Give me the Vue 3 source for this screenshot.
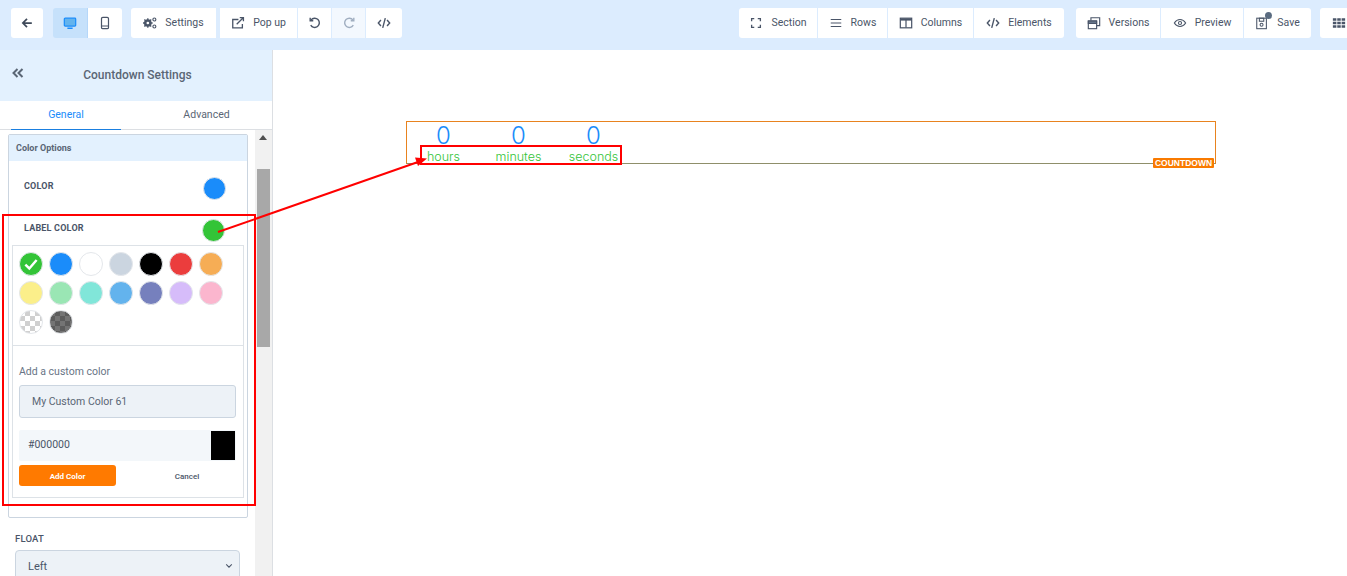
<script setup>
const leftTools = [
  { t: 'Settings', w: 85, i: 'gears' },
  { t: 'Pop up', w: 77, i: 'popup', gap: 4 },
  { w: 33, i: 'undo', gap: 1 },
  { w: 33, i: 'redo', gap: 1, dim: true },
  { w: 36, i: 'code', gap: 1 },
]
const viewTools = [
  { t: 'Section', w: 78, i: 'section' },
  { t: 'Rows', w: 69, i: 'rows', gap: 1 },
  { t: 'Columns', w: 85, i: 'cols', gap: 1 },
  { t: 'Elements', w: 90, i: 'code', gap: 1 },
]
const saveTools = [
  { t: 'Versions', w: 84, i: 'versions' },
  { t: 'Preview', w: 82, i: 'eye', gap: 1 },
  { t: 'Save', w: 67, i: 'save', gap: 1 },
]
const swatches = [
  { c: '#33c437', on: true }, { c: '#1a8cfa' }, { c: '#ffffff' }, { c: '#cbd5e0' }, { c: '#000000' }, { c: '#eb3d3d' }, { c: '#f6ad55' },
  { c: '#fbef8a' }, { c: '#9ae6b4' }, { c: '#81e6d9' }, { c: '#63b3ed' }, { c: '#7680bd' }, { c: '#d6bcfa' }, { c: '#fbb6ce' },
  { k: 'light' }, { k: 'dark' },
]
const counts = ['hours', 'minutes', 'seconds']
</script>

<template>
  <div class="page">
    <header class="topbar">
      <button class="tool back"><svg class="ic" viewBox="0 0 16 16"><path d="M13.500 8H3.500M8 3.300 3.300 8 8 12.700" fill="none" stroke="#3f4a5a" stroke-width="2"/></svg></button>
      <div class="group devices">
        <button class="tool device active"><svg class="ic" viewBox="0 0 16 16"><rect x="1.500" y="2.500" width="13" height="9" rx="1" fill="#63b3ed" stroke="#1a8cfa" stroke-width="1.400"/><path d="M5 14h6" stroke="#1a8cfa" stroke-width="1.600"/></svg></button>
        <button class="tool device m"><svg class="ic" viewBox="0 0 16 16"><rect x="4" y="1.500" width="8" height="13" rx="1.500" fill="none" stroke="#4a5568" stroke-width="1.400"/><path d="M4 11.500h8" stroke="#4a5568" stroke-width="1.200"/></svg></button>
      </div>

      <div class="group tools-left">
        <button v-for="b in leftTools" :key="b.i" class="tool" :class="{ dim: b.dim }" :style="{ width: b.w + 'px', marginLeft: (b.gap || 0) + 'px' }">
          <svg class="ic" viewBox="0 0 16 16">
            <g v-if="b.i === 'gears'">
              <circle cx="5.500" cy="8" r="3.200" fill="none" stroke="#4a5568" stroke-width="2.400"/>
              <path d="M5.500 2.500v11M0 8h11M1.600 4.100l7.800 7.800M9.400 4.100l-7.800 7.800" stroke="#4a5568" stroke-width="1.500"/>
              <circle cx="5.500" cy="8" r="1.500" fill="#fff"/>
              <circle cx="13" cy="4" r="1.700" fill="none" stroke="#4a5568" stroke-width="1.300"/>
              <circle cx="13" cy="12" r="1.700" fill="none" stroke="#4a5568" stroke-width="1.300"/>
            </g>
            <g v-else-if="b.i === 'popup'" fill="none" stroke="#4a5568" stroke-width="1.500"><path d="M13 9v4.500H2V4h6.500"/><path d="M6.500 9.500 14 2M10 1.800h4.200V6"/></g>
            <g v-else-if="b.i === 'undo'" fill="none" stroke="#4a5568" stroke-width="1.600"><path d="M3.500 4.500a5.300 5.300 0 1 1-.4 6"/><path d="M2.500 2v3.500H6"/></g>
            <g v-else-if="b.i === 'redo'" fill="none" stroke="#a0aec0" stroke-width="1.600"><path d="M12.500 4.500a5.300 5.300 0 1 0 .4 6"/><path d="M13.500 2v3.500H10"/></g>
            <g v-else fill="none" stroke="#4a5568" stroke-width="1.600"><path d="M4.500 4.500 1.500 8l3 3.500M11.500 4.500l3 3.500-3 3.500M9.500 2.500l-3 11"/></g>
          </svg>
          <span v-if="b.t" class="tool-label">{{ b.t }}</span>
        </button>
      </div>

      <div class="group tools-view">
        <button v-for="b in viewTools" :key="b.i" class="tool" :style="{ width: b.w + 'px', marginLeft: (b.gap || 0) + 'px' }">
          <svg class="ic" viewBox="0 0 16 16">
            <path v-if="b.i === 'section'" d="M3 6V3h3M10 3h3v3M13 10v3h-3M6 13H3v-3" fill="none" stroke="#4a5568" stroke-width="1.500"/>
            <path v-else-if="b.i === 'rows'" d="M2 4h12M2 8h12M2 12h12" stroke="#4a5568" stroke-width="1.400"/>
            <g v-else-if="b.i === 'cols'" fill="none" stroke="#4a5568"><rect x="1.500" y="2.500" width="13" height="11" stroke-width="1.400"/><path d="M1.500 4h13" stroke-width="2.500"/><path d="M8 4v9" stroke-width="1.400"/></g>
            <path v-else d="M4.500 4.500 1.500 8l3 3.500M11.500 4.500l3 3.500-3 3.500M9.500 2.500l-3 11" fill="none" stroke="#4a5568" stroke-width="1.600"/>
          </svg>
          <span class="tool-label">{{ b.t }}</span>
        </button>
      </div>

      <div class="group tools-save">
        <button v-for="b in saveTools" :key="b.i" class="tool" :style="{ width: b.w + 'px', marginLeft: (b.gap || 0) + 'px' }">
          <span class="ic-wrap">
            <svg class="ic" viewBox="0 0 16 16">
              <g v-if="b.i === 'versions'" fill="none" stroke="#4a5568" stroke-width="1.300"><rect x="1.500" y="5.500" width="9.500" height="9" fill="#fff"/><path d="M1.500 6h9.500v2.500h-9.500z" fill="#718096"/><path d="M4.500 5V2H14.500V11h-3.500"/></g>
              <g v-else-if="b.i === 'eye'" fill="none" stroke="#4a5568" stroke-width="1.200"><path d="M1.500 8C3.500 5 5.700 4 8 4s4.500 1 6.500 4c-2 3-4.200 4-6.500 4S3.500 11 1.500 8z"/><circle cx="8" cy="8" r="1.800"/></g>
              <g v-else fill="none" stroke="#4a5568" stroke-width="1.200"><rect x="2" y="2.500" width="11" height="12"/><rect x="5" y="2.500" width="5" height="3.500"/><circle cx="7.500" cy="10" r="1.700"/></g>
            </svg>
            <span v-if="b.i === 'save'" class="dot"></span>
          </span>
          <span class="tool-label">{{ b.t }}</span>
        </button>
      </div>

      <button class="tool grid-btn"><svg class="ic" viewBox="0 0 16 16" fill="#4a5568"><path d="M1 2.500h4v3H1zM6 2.500h4v3H6zM11 2.500h4v3h-4zM1 6.500h4v3H1zM6 6.500h4v3H6zM11 6.500h4v3h-4zM1 10.500h4v3H1zM6 10.500h4v3H6zM11 10.500h4v3h-4z"/></svg></button>
    </header>

    <div class="body">
      <aside class="side">
        <div class="side-head">
          <svg class="collapse" viewBox="0 0 12 10"><path d="M5.500 1 1.500 5l4 4M10.500 1l-4 4 4 4" fill="none" stroke="#5a6675" stroke-width="2"/></svg>
          <span>Countdown Settings</span>
        </div>
        <div class="tabs">
          <div class="tab on">General</div>
          <div class="tab">Advanced</div>
        </div>
        <div class="side-main">
          <div class="scroll-area">
            <section class="card">
              <div class="card-head">Color Options</div>
              <div class="opt-row first"><span>COLOR</span><i class="pick blue"></i></div>
              <div class="opt-row second"><span>LABEL COLOR</span><i class="pick green"></i></div>
              <div class="picker">
                <div class="swatches">
                  <span v-for="(s, n) in swatches" :key="n" class="sw" :class="[s.k, { white: s.c === '#ffffff' }]" :style="s.c ? { background: s.c } : null">
                    <svg v-if="s.on" viewBox="0 0 16 16"><path d="M3 8.500 6.500 12 13 4.500" fill="none" stroke="#fff" stroke-width="2.200"/></svg>
                  </span>
                </div>
                <div class="custom">
                  <div class="custom-title">Add a custom color</div>
                  <div class="name-input">My Custom Color 61</div>
                  <div class="hex-row"><span>#000000</span><i class="hex-box"></i></div>
                  <div class="actions">
                    <button class="add">Add Color</button>
                    <button class="cancel">Cancel</button>
                  </div>
                </div>
              </div>
            </section>
            <div class="float-label">FLOAT</div>
            <div class="select">
              <span>Left</span>
              <svg viewBox="0 0 10 6"><path d="M1.500 1 5 4.500 8.500 1" fill="none" stroke="#4a5568" stroke-width="1.300"/></svg>
            </div>
          </div>
          <div class="scrollbar">
            <svg class="up" viewBox="0 0 8 5"><path d="M4 0 8 5H0z" fill="#505050"/></svg>
            <div class="thumb"></div>
          </div>
        </div>
      </aside>

      <main class="canvas">
        <div class="countdown">
          <div v-for="c in counts" :key="c" class="unit">
            <div class="num">0</div>
            <div class="lbl">{{ c }}</div>
          </div>
          <span class="tag">COUNTDOWN</span>
        </div>
      </main>
    </div>

    <svg class="notes" width="1347" height="576" viewBox="0 0 1347 576">
      <g fill="none" stroke="#f00" stroke-width="2">
        <rect x="3" y="215" width="252" height="290"/>
        <rect x="421" y="146" width="200" height="18"/>
        <path d="M218 232 418 162"/>
      </g>
      <path d="M427 158.500 415 157.500 418 166z" fill="#f00"/>
    </svg>
  </div>
</template>

<style>
html, body { margin: 0; overflow: hidden; background: #fff; }
</style>

<style scoped>
.page { position: relative; width: 1347px; height: 576px; overflow: hidden; font-family: Roboto, "Liberation Sans", sans-serif; color: #4a5568; }
button { font-family: inherit; border: 0; padding: 0; }

.topbar { display: flex; align-items: flex-start; height: 50px; box-sizing: border-box; padding: 8px 0 0 11px; background: #dcecfe; white-space: nowrap; }
.group { display: flex; flex: none; }
.tool { flex: none; display: flex; align-items: center; justify-content: center; gap: 8px; height: 30px; background: #fff; color: #4a5568; font-size: 10.5px; }
.tool-label { line-height: 1; }
.ic { width: 14px; height: 14px; flex: none; display: block; }
.ic-wrap { position: relative; display: block; }
.dot { position: absolute; top: -4px; right: -3px; width: 7px; height: 7px; border-radius: 50%; background: #5a6b80; }
.back { width: 32px; border-radius: 3px; }
.devices { margin-left: 10px; border-radius: 3px; overflow: hidden; }
.device { width: 35px; }
.device.m { width: 34px; }
.device.active { background: #c6e1fb; border-right: 1px solid #b5d7fa; }
.tools-left { margin-left: 9px; }
.tools-left .tool:first-child, .tools-view .tool:first-child, .tools-save .tool:first-child { border-radius: 3px 0 0 3px; }
.tools-left .tool:last-child, .tools-view .tool:last-child, .tools-save .tool:last-child { border-radius: 0 3px 3px 0; }
.tool.dim { background: #f3f8fe; }
.tools-view { margin-left: 337px; }
.tools-save { margin-left: 12px; }
.grid-btn { width: 40px; margin-left: 9px; border-radius: 3px 0 0 3px; justify-content: flex-start; padding-left: 12px; box-sizing: border-box; }

.body { display: flex; height: 526px; }
.side { flex: none; width: 273px; box-sizing: border-box; border-right: 1px solid #dcdfe3; display: flex; flex-direction: column; }
.side-head { position: relative; height: 51px; flex: none; background: #e3f1fe; display: flex; align-items: center; justify-content: center; font-size: 12px; font-weight: 500; color: #5a6675; padding: 0 0 2px 3px; box-sizing: border-box; }
.collapse { position: absolute; left: 12px; top: 18px; width: 12px; height: 10px; }
.tabs { flex: none; display: flex; height: 29px; padding-left: 11px; box-sizing: border-box; border-bottom: 1px solid #dcdfe3; }
.tab { flex: none; width: 110px; line-height: 27px; text-align: center; font-size: 10.5px; color: #5a6675; margin-right: 30px; }
.tab:last-child { width: 111px; margin-right: 0; }
.tab.on { color: #1a8cfa; height: 29px; box-sizing: border-box; border-bottom: 1px solid #1a7fe0; }

.side-main { flex: 1; display: flex; min-height: 0; }
.scroll-area { flex: none; width: 255px; overflow: hidden; padding: 4px 0 0 8px; box-sizing: border-box; }
.scrollbar { flex: none; width: 17px; background: #f1f1f1; }
.up { display: block; width: 8px; height: 5px; margin: 5px 0 0 4px; }
.thumb { width: 13px; height: 178px; margin: 29px 0 0 2px; background: #a8a8a8; }

.card { width: 240px; height: 384px; box-sizing: border-box; border: 1px solid #cbd5e0; border-radius: 2px; }
.card-head { height: 26px; background: #e3f1fe; font-size: 9px; font-weight: 700; color: #5a6675; line-height: 27px; padding-left: 7px; }
.opt-row { display: flex; justify-content: space-between; font-size: 9px; font-weight: 700; letter-spacing: .2px; color: #4a5568; padding-left: 15px; }
.opt-row.first { margin-top: 17px; height: 41px; padding-right: 21px; }
.opt-row.first .pick { margin-top: -1px; }
.opt-row.second { height: 26px; padding-right: 22px; }
.opt-row span { line-height: 17px; }
.opt-row.second span { line-height: 18px; }
.pick { display: block; width: 21px; height: 21px; border-radius: 50%; border: 1px solid #e3e6ea; }
.blue { background: #1a8cfa; }
.green { background: #33c437; }

.picker { margin-left: 3px; width: 232px; height: 253px; box-sizing: border-box; border: 1px solid #dde2e7; }
.swatches { display: grid; grid-template-columns: repeat(7, 30px); grid-auto-rows: 29px; height: 100px; box-sizing: border-box; padding: 6px 0 0 6px; border-bottom: 1px solid #dde2e7; }
.sw { display: block; width: 22px; height: 22px; border-radius: 50%; border: 1px solid #e4e7eb; }
.sw svg { display: block; width: 18px; height: 18px; margin: 2px; }
.light { background: repeating-conic-gradient(#d0d0d0 0 25%, #fff 0 50%) 0 0 / 10px 10px; }
.dark { background: repeating-conic-gradient(#5c5c5c 0 25%, #747474 0 50%) 0 0 / 10px 10px; }

.custom { padding: 0 6px; }
.custom-title { font-size: 10.5px; color: #687485; margin-top: 19px; line-height: 14px; }
.name-input { margin-top: 6px; height: 33px; box-sizing: border-box; width: 217px; background: #edf2f7; border: 1px solid #cbd5e0; border-radius: 3px; font-size: 10.5px; line-height: 31px; padding-left: 12px; color: #5a6675; }
.hex-row { margin-top: 12px; width: 217px; height: 31px; display: flex; justify-content: space-between; background: #f3f7fa; border-radius: 2px; font-size: 10.5px; line-height: 29px; padding-left: 9px; box-sizing: border-box; color: #4a5568; }
.hex-box { display: block; width: 24px; height: 29px; margin: 1px 1px 0 0; background: #000; }
.actions { display: flex; margin-top: 4px; }
.add { flex: none; width: 97px; height: 21px; padding-top: 1px; background: #ff7a00; color: #fff; border-radius: 3px; font-size: 8px; font-weight: 700; }
.cancel { flex: none; width: 142px; height: 21px; padding-top: 1px; background: none; color: #4a5568; font-size: 8px; font-weight: 500; text-align: center; }

.float-label { margin: 15px 0 0 7px; font-size: 9.5px; font-weight: 500; letter-spacing: .2px; line-height: 12px; color: #4a5568; }
.select { margin: 5px 0 0 7px; width: 225px; height: 34px; box-sizing: border-box; background: #edf2f7; border: 1px solid #cbd5e0; border-radius: 4px; display: flex; justify-content: space-between; align-items: center; padding: 0 6px 2px 12px; font-size: 11px; color: #4a5568; }
.select svg { width: 8px; height: 6px; }

.canvas { flex: 1; padding: 71px 0 0 133px; background: #fff; }
.countdown { position: relative; display: flex; width: 810px; height: 43px; box-sizing: border-box; border: 1px solid #e8831f; border-bottom-color: #8f8f6a; }
.unit { width: 75px; text-align: center; font-family: Inter, sans-serif; }
.unit:first-child { margin-left: -1px; }
.num { font-size: 24px; font-weight: 300; line-height: 28px; color: #1a8cfa; }
.lbl { font-size: 12.5px; font-weight: 300; line-height: 15px; margin-top: -1px; color: #33c437; }
.tag { position: absolute; right: 1px; bottom: -5px; width: 61px; height: 10px; border-radius: 1px; background: #f97a00; color: #fff; font-size: 8.5px; font-weight: 700; font-family: "Liberation Sans", sans-serif; line-height: 10px; text-align: center; }

.notes { position: absolute; left: 0; top: 0; pointer-events: none; }
</style>
